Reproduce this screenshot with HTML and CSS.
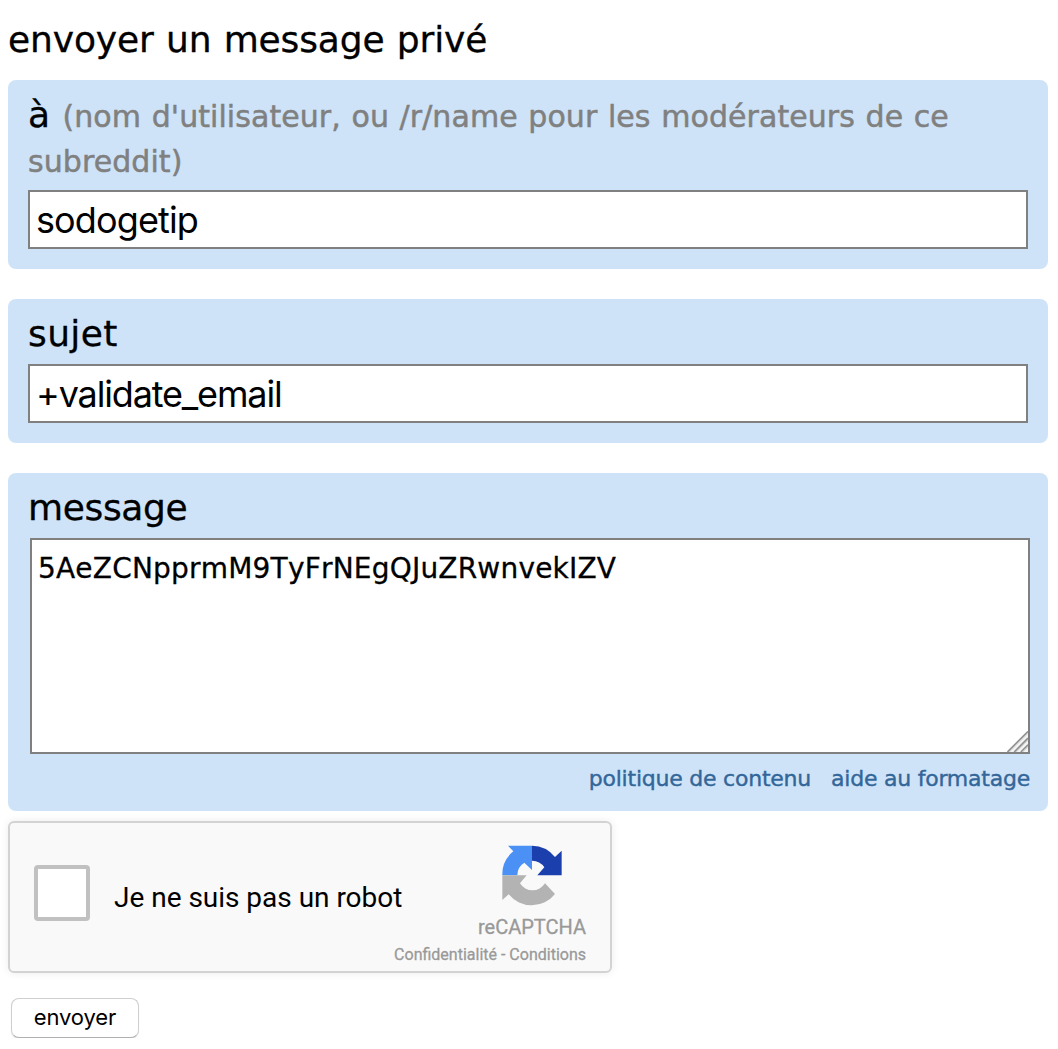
FILE: index.html
```html
<!DOCTYPE html>
<html lang="fr">
<head>
<meta charset="utf-8">
<title>envoyer un message privé</title>
<link rel="stylesheet" href="styles.css">
</head>
<body>
<form class="compose">
  <h1 class="title">envoyer un message privé</h1>

  <section class="panel panel-to">
    <label class="label" for="to">à <span class="hint">(nom d'utilisateur, ou /r/name pour les modérateurs de ce subreddit)</span></label>
    <input class="field field-to" id="to" type="text" value="sodogetip">
  </section>

  <section class="panel panel-subject">
    <label class="label" for="subject">sujet</label>
    <input class="field field-subject" id="subject" type="text" value="+validate_email">
  </section>

  <section class="panel panel-message">
    <label class="label" for="message">message</label>
    <div class="area-wrap">
      <textarea class="area" id="message" spellcheck="false">5AeZCNpprmM9TyFrNEgQJuZRwnvekIZV</textarea>
      <svg class="grip" viewBox="0 0 22 22" aria-hidden="true">
        <path d="M0 22 22 0V22Z" fill="#f4f4f4"/>
        <path d="M.5 22 22 .5M7.5 22 22 7.5M14.5 22 22 14.5" stroke="#8f8f8f" stroke-width="1.7"/>
        <path d="M2.5 22 22 2.5M9.5 22 22 9.5M16.5 22 22 16.5" stroke="#c9c9c9" stroke-width="1"/>
      </svg>
    </div>
    <div class="links">
      <a class="link link-policy" href="#">politique de contenu</a>
      <a class="link link-help" href="#">aide au formatage</a>
    </div>
  </section>

  <div class="captcha">
    <span class="check" role="checkbox" aria-checked="false" tabindex="0"></span>
    <span class="robot">Je ne suis pas un robot</span>
    <div class="brand">
      <svg class="logo" viewBox="366 90 181 182" aria-hidden="true">
        <path fill="#4a90f5" d="M384 92H456V165L433 143A44 44 0 0 0 412 181H367A89 89 0 0 1 400 109Z"/>
        <path fill="#1c3fae" d="M456 92A89 89 0 0 1 525 126L545 107V181H472L493 157A44 44 0 0 0 456 137Z"/>
        <path fill="#b3b3b3" d="M367 181H440L420 205A44 44 0 0 0 495 205L525 237A89 89 0 0 1 386 238L367 255Z"/>
      </svg>
      <span class="brand-name">reCAPTCHA</span>
      <span class="terms">Confidentialité - Conditions</span>
    </div>
  </div>

  <button class="send" type="button">envoyer</button>
</form>
</body>
</html>
```
FILE: styles.css
```css
* {
  box-sizing: border-box;
}

body {
  margin: 0;
  background: #fff;
  color: #000;
  font-family: Verdana, "DejaVu Sans", sans-serif;
}

.compose {
  display: flex;
  flex-direction: column;
  align-items: flex-start;
  padding: 0 10px 0 8px;
}

.title {
  height: 80px;
  margin: 0;
  padding-top: 17px;
  font-size: 36px;
  font-weight: 400;
  line-height: 45px;
  letter-spacing: -.13px;
  word-spacing: 1px;
  -webkit-text-stroke: .3px;
}

.panel {
  display: flex;
  flex-direction: column;
  width: 100%;
  padding: 12px 20px 20px;
  border-radius: 8px;
  background: #cee3f8;
}

.panel-to {
  height: 189px;
  margin-bottom: 30px;
}

.panel-subject {
  height: 144px;
  margin-bottom: 30px;
}

.panel-message {
  height: 338px;
  margin-bottom: 10px;
}

.label {
  flex: 1;
  font-size: 36px;
  line-height: 45px;
  -webkit-text-stroke: .3px;
}

.panel-to .label {
  word-spacing: 1px;
}

.panel-subject .label {
  letter-spacing: .4px;
}

.panel-message .label {
  letter-spacing: -.35px;
}

.hint {
  color: gray;
  font-size: 30px;
  line-height: 36px;
  letter-spacing: .07px;
  -webkit-text-stroke: .5px;
}

.field {
  width: 100%;
  height: 59px;
  padding: 0 6px;
  border: 2px solid #808080;
  background: #fff;
  color: #000;
  font-family: Inter, sans-serif;
  font-size: 36px;
  outline: 0;
}

.field-to {
  letter-spacing: -.88px;
}

.field-subject {
  letter-spacing: -1.15px;
}

.area-wrap {
  position: relative;
  width: 1000px;
  height: 216px;
  margin-left: 2px;
}

.area {
  display: block;
  width: 100%;
  height: 100%;
  padding: 11px 6px;
  border: 2px solid #808080;
  background: #fff;
  color: #000;
  font-family: Verdana, "DejaVu Sans", sans-serif;
  font-size: 28px;
  line-height: 36px;
  letter-spacing: .2px;
  font-kerning: none;
  -webkit-text-stroke: .3px;
  resize: none;
  overflow: hidden;
}

.grip {
  position: absolute;
  right: 2px;
  bottom: 2px;
  width: 21px;
  height: 21px;
}

.links {
  display: flex;
  justify-content: flex-end;
  gap: 20px;
  width: 1002px;
  height: 37px;
  padding-top: 10px;
}

.link {
  color: #369;
  font-size: 22px;
  line-height: 30px;
  letter-spacing: -.23px;
  text-decoration: none;
  -webkit-text-stroke: .4px;
}

.captcha {
  display: flex;
  width: 604px;
  height: 152px;
  padding: 22px 24px 0;
  border: 2px solid #d3d3d3;
  border-radius: 6px;
  background: #f9f9f9;
  box-shadow: 0 0 8px rgba(0, 0, 0, .08);
  font-family: Roboto, sans-serif;
}

.check {
  width: 56px;
  height: 56px;
  margin-top: 20px;
  border: 4px solid #c1c1c1;
  border-radius: 4px;
  background: #fff;
}

.robot {
  margin: 36px 0 0 24px;
  font-size: 28px;
  line-height: 34px;
  letter-spacing: -.02px;
  white-space: nowrap;
}

.brand {
  display: flex;
  flex: 1;
  flex-direction: column;
  align-items: flex-end;
  width: 0;
  color: #999;
  white-space: nowrap;
  -webkit-text-stroke: .3px;
}

.logo {
  width: 60.33px;
  height: 60.67px;
  margin-right: 23.5px;
}

.brand-name {
  margin-top: 8px;
  font-size: 20px;
  line-height: 26px;
}

.terms {
  margin-top: 5px;
  font-size: 16px;
  line-height: 20px;
}

.send {
  width: 128px;
  height: 40px;
  margin: 25px 0 0 3px;
  padding: 0 0 2px;
  border: 1px solid #cfcfcf;
  border-bottom-color: #b0b0b0;
  border-radius: 8px;
  background: #fff;
  box-shadow: 0 1px 1px rgba(0, 0, 0, .1);
  color: #000;
  font-family: Inter, sans-serif;
  font-size: 22px;
  letter-spacing: -.1px;
}
```
